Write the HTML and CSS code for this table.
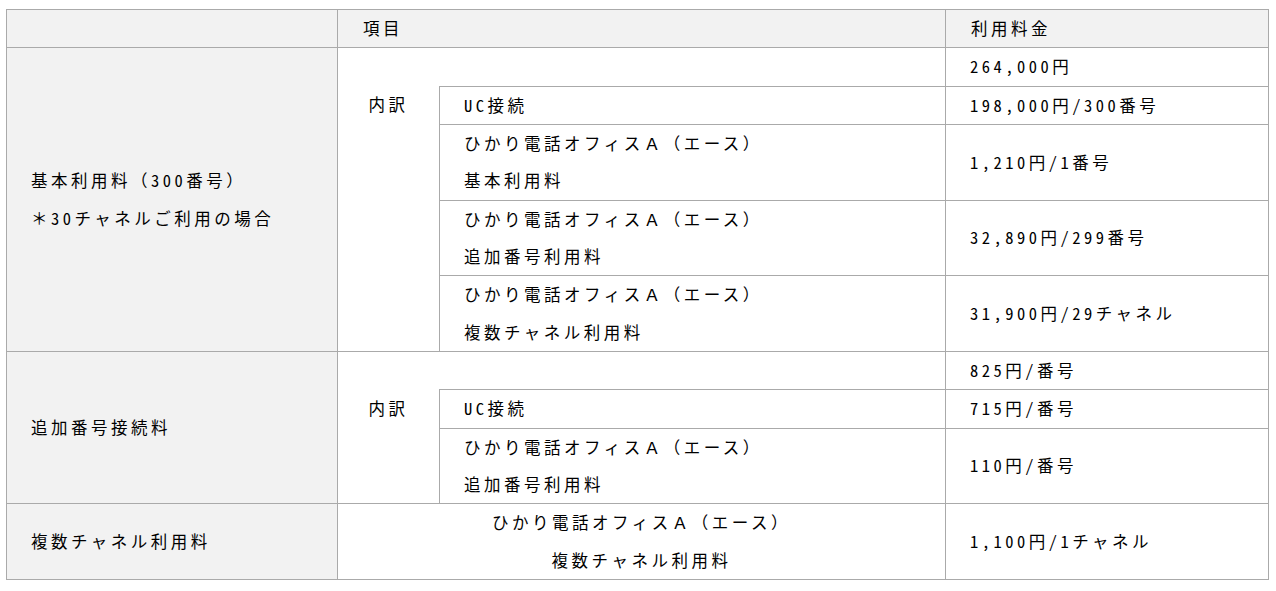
FILE: index.html
```html
<!DOCTYPE html>
<html lang="ja">
<head>
<meta charset="utf-8">
<link rel="stylesheet" href="styles.css">
</head>
<body>
<div class="wrap">
<table class="price">
  <colgroup>
    <col class="c1">
    <col class="c2a">
    <col class="c2b">
    <col class="c3">
  </colgroup>
  <thead>
    <tr>
      <th class="side"></th>
      <th colspan="2">項目</th>
      <th>利用料金</th>
    </tr>
  </thead>
  <tbody>
    <tr>
      <td rowspan="5" class="side">基本利用料<span class="fw">（</span>300番号<span class="fw">）</span><br><span class="fw">＊</span>30チャネルご利用の場合</td>
      <td colspan="2" class="blank"></td>
      <td>264,000円</td>
    </tr>
    <tr>
      <td rowspan="4" class="uchi">内訳</td>
      <td>UC接続</td>
      <td>198,000円/300番号</td>
    </tr>
    <tr>
      <td>ひかり電話オフィス<span class="fw">Ａ（エース）</span><br>基本利用料</td>
      <td>1,210円/1番号</td>
    </tr>
    <tr>
      <td>ひかり電話オフィス<span class="fw">Ａ（エース）</span><br>追加番号利用料</td>
      <td>32,890円/299番号</td>
    </tr>
    <tr>
      <td>ひかり電話オフィス<span class="fw">Ａ（エース）</span><br>複数チャネル利用料</td>
      <td>31,900円/29チャネル</td>
    </tr>
    <tr>
      <td rowspan="3" class="side">追加番号接続料</td>
      <td colspan="2" class="blank"></td>
      <td>825円/番号</td>
    </tr>
    <tr>
      <td rowspan="2" class="uchi">内訳</td>
      <td>UC接続</td>
      <td>715円/番号</td>
    </tr>
    <tr>
      <td>ひかり電話オフィス<span class="fw">Ａ（エース）</span><br>追加番号利用料</td>
      <td>110円/番号</td>
    </tr>
    <tr>
      <td class="side">複数チャネル利用料</td>
      <td colspan="2" class="center">ひかり電話オフィス<span class="fw">Ａ（エース）</span><br>複数チャネル利用料</td>
      <td>1,100円/1チャネル</td>
    </tr>
  </tbody>
</table>
</div>
</body>
</html>
```

FILE: styles.css
```css
html, body {
  margin: 0;
  padding: 0;
  background: #fff;
}
.wrap {
  padding: 9px 0 0 6px;
}
.price {
  border-collapse: collapse;
  table-layout: fixed;
  width: 1262px;
  font-family: "Noto Sans CJK JP", "Noto Sans", sans-serif;
  font-size: 16.5px;
  font-feature-settings: "hwid" 1;
  letter-spacing: 3.5px;
  color: #000;
}
.fw {
  font-feature-settings: normal;
}
.c1 { width: 331px; }
.c2a { width: 102px; }
.c2b { width: 506px; }
.c3 { width: 323px; }
.price th,
.price td {
  border: 1px solid #aaaaaa;
  padding: 0 24px;
  line-height: 37.33px;
  text-align: left;
  vertical-align: middle;
  font-weight: normal;
}
.price th {
  background: #f2f2f2;
  padding-left: 25px;
}
.price td.side {
  background: #f2f2f2;
}
.price td.blank {
  border-bottom: none;
}
.price td.uchi {
  border-top: none;
  text-align: center;
  vertical-align: top;
  padding: 0;
}
.price td.center {
  text-align: center;
}
```
